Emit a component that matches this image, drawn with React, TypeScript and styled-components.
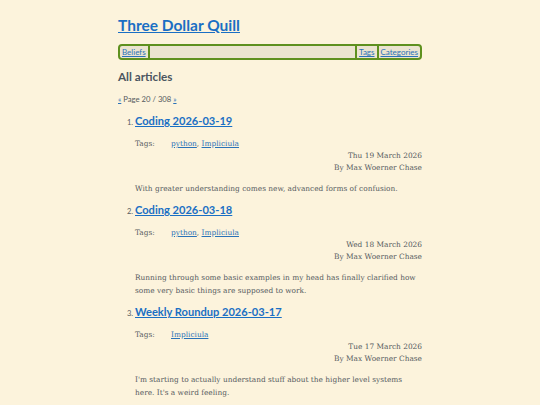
import React from "react"
import styled, { createGlobalStyle } from "styled-components";

const Global = createGlobalStyle`
    html, body {
        margin: 0;
        padding: 0;
        background: #fcf3dc;
    }
    body {
        font-family: "DejaVu Serif", "Liberation Serif", serif;
        color: #555a5e;
    }
`

const Pagina = styled.div`
    width: 304px;
    margin: 0 auto;
    padding-top: 14px;
`

const Titulo = styled.h1`
    font-family: "Lato", "Open Sans", sans-serif;
    font-weight: 700;
    font-size: 15.5px;
    line-height: 22px;
    margin: 0 0 8px 0;
    a {
        color: #1a6fc4;
    }
`

const Navegacao = styled.nav`
    display: flex;
    align-items: stretch;
    border: 2px solid #5e901f;
    border-radius: 4px;
    background: #ebe4d0;
    height: 12px;
    font-family: "Lato", "Open Sans", sans-serif;
    font-size: 8px;
    line-height: 12px;
`

const LinkNav = styled.a`
    color: #2a72b8;
    padding: 0 2px;
`

const Separador = styled.span`
    width: 2px;
    background: #5e901f;
`

const Espaco = styled.span`
    flex: 1;
`

const Subtitulo = styled.h2`
    font-family: "Lato", "Open Sans", sans-serif;
    font-weight: 700;
    font-size: 11.7px;
    line-height: 16px;
    color: #4b5560;
    margin: 8px 0 0 0;
`

const Paginacao = styled.p`
    font-family: "Lato", "Open Sans", sans-serif;
    font-size: 7.7px;
    margin: 10px 0 0 0;
    a {
        color: #2a72b8;
    }
`

const Lista = styled.ol`
    margin: 7px 0 0 0;
    padding-left: 17px;
    font-family: "Lato", "Open Sans", sans-serif;
    font-size: 7.5px;
`

const Item = styled.li`
    margin-bottom: 5px;
`

const TituloArtigo = styled.h3`
    display: inline;
    font-family: "Lato", "Open Sans", sans-serif;
    font-weight: 700;
    font-size: 11.1px;
    line-height: 20px;
    a {
        color: #1a6fc4;
    }
`

const Corpo = styled.div`
    font-family: "DejaVu Serif", "Liberation Serif", serif;
    font-size: 7.4px;
    line-height: 12px;
`

const LinhaTags = styled.div`
    display: flex;
    margin-top: 6px;
    line-height: 13px;
    a {
        color: #2a72b8;
    }
`

const RotuloTags = styled.span`
    width: 36px;
`

const Meta = styled.div`
    text-align: right;
`

const Resumo = styled.p`
    margin: 8px 0 0 0;
    line-height: 13px;
`

interface Artigo {
    titulo: string,
    tags: string[],
    data: string,
    resumo: string
}

const artigos: Artigo[] = [
    {
        titulo: "Coding 2026-03-19",
        tags: ["python", "Impliciula"],
        data: "Thu 19 March 2026",
        resumo: "With greater understanding comes new, advanced forms of confusion."
    },
    {
        titulo: "Coding 2026-03-18",
        tags: ["python", "Impliciula"],
        data: "Wed 18 March 2026",
        resumo: "Running through some basic examples in my head has finally clarified how some very basic things are supposed to work."
    },
    {
        titulo: "Weekly Roundup 2026-03-17",
        tags: ["Impliciula"],
        data: "Tue 17 March 2026",
        resumo: "I'm starting to actually understand stuff about the higher level systems here. It's a weird feeling."
    }
]

export default function App() {
    return (
        <>
            <Global />
            <Pagina>
                <Titulo><a href="#">Three Dollar Quill</a></Titulo>
                <Navegacao>
                    <LinkNav href="#">Beliefs</LinkNav>
                    <Separador />
                    <Espaco />
                    <Separador />
                    <LinkNav href="#">Tags</LinkNav>
                    <Separador />
                    <LinkNav href="#">Categories</LinkNav>
                </Navegacao>
                <Subtitulo>All articles</Subtitulo>
                <Paginacao><a href="#">«</a> Page 20 / 308 <a href="#">»</a></Paginacao>
                <Lista>
                    {artigos.map(artigo => (
                        <Item key={artigo.titulo}>
                            <TituloArtigo><a href="#">{artigo.titulo}</a></TituloArtigo>
                            <Corpo>
                                <LinhaTags>
                                    <RotuloTags>Tags:</RotuloTags>
                                    <span>
                                        {artigo.tags.map((tag, i) => (
                                            <React.Fragment key={tag}>
                                                {i > 0 && ", "}
                                                <a href="#">{tag}</a>
                                            </React.Fragment>
                                        ))}
                                    </span>
                                </LinhaTags>
                                <Meta>{artigo.data}</Meta>
                                <Meta>By Max Woerner Chase</Meta>
                                <Resumo>{artigo.resumo}</Resumo>
                            </Corpo>
                        </Item>
                    ))}
                </Lista>
            </Pagina>
        </>
    )
}
